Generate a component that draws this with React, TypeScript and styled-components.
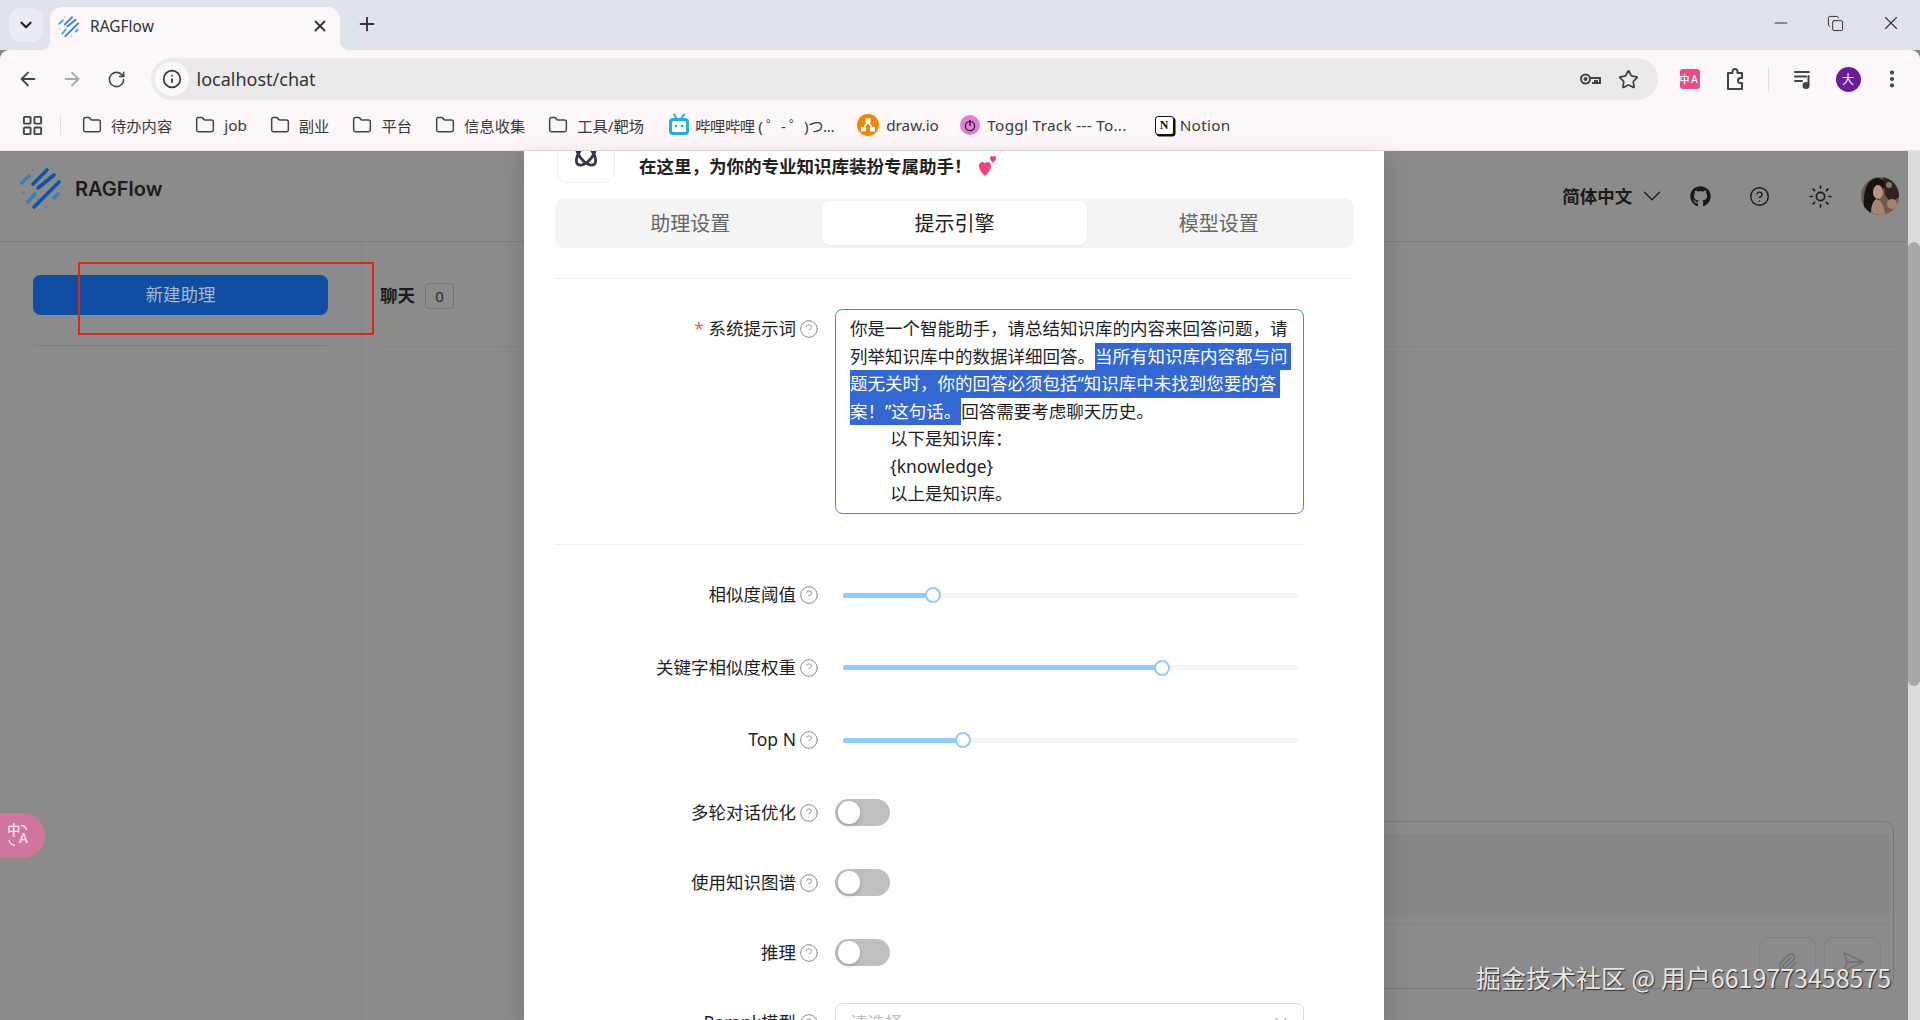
import React from "react";
import styled, { createGlobalStyle } from "styled-components";
import {
  ArrowLeft,
  ArrowRight,
  RotateCw,
  Info,
  Star,
  EllipsisVertical,
  Folder,
  LayoutGrid,
  Plus,
  X,
  ChevronDown,
  Minus,
  Copy,
  CircleHelp,
  Sun,
  Paperclip,
  SendHorizontal,
} from "lucide-react";
import { FaGithub } from "react-icons/fa";

const Global = createGlobalStyle`
  html, body { margin: 0; padding: 0; height: 100%; overflow: hidden; }
  body { font-family: "Noto Sans", "Noto Sans CJK SC", sans-serif; background: #8b8b8b; }
  * { box-sizing: border-box; }
`;

const Window = styled.div`
  width: 1920px;
  height: 1020px;
  display: flex;
  flex-direction: column;
  position: relative;
  overflow: hidden;
`;

/* ---------- browser chrome ---------- */
const TabStrip = styled.div`
  height: 50px;
  background: #dfe3ea;
  display: flex;
  align-items: flex-end;
  padding-left: 9px;
  flex: none;
`;
const TabMenu = styled.div`
  width: 34px;
  height: 34px;
  margin-bottom: 8px;
  border-radius: 12px;
  background: #e9edf6;
  display: flex;
  align-items: center;
  justify-content: center;
  color: #222;
`;
const Tab = styled.div`
  width: 290px;
  height: 43px;
  margin-left: 7px;
  background: #fdf7f9;
  border-radius: 12px 12px 0 0;
  display: flex;
  align-items: center;
  padding: 0 11px 6px 3px;
  color: #333;
  font-size: 15.5px;
  position: relative;
  &::before, &::after {
    content: "";
    position: absolute;
    bottom: 0;
    width: 10px;
    height: 10px;
  }
  &::before { left: -10px; background: radial-gradient(circle at 0 0, transparent 10px, #fdf7f9 10.5px); }
  &::after { right: -10px; background: radial-gradient(circle at 100% 0, transparent 10px, #fdf7f9 10.5px); }
`;
const TabTitle = styled.span`
  flex: 1;
  margin-left: 1px;
`;
const NewTab = styled.div`
  margin: 0 0 15px 16px;
  color: #333;
  display: flex;
`;
const WindowControls = styled.div`
  margin-left: auto;
  display: flex;
  align-items: center;
  gap: 36px;
  padding: 0 18px 16px 0;
  color: #333;
`;
const Toolbar = styled.div`
  height: 55px;
  flex: none;
  background: #fdf7f9;
  border-radius: 9px 9px 0 0;
  padding: 8px 0 5px 16px;
  display: flex;
  align-items: center;
  color: #444;
`;
const NavButton = styled.div<{ $muted?: boolean; $gap?: number; $lead?: number }>`
  display: flex;
  width: 24px;
  justify-content: center;
  margin-left: ${(p) => p.$lead ?? 0}px;
  margin-right: ${(p) => p.$gap ?? 0}px;
  color: ${(p) => (p.$muted ? "#a8a8a8" : "#444")};
`;
const AddressBar = styled.div`
  width: 1507px;
  height: 42px;
  background: #ece9ec;
  border-radius: 21px;
  display: flex;
  align-items: center;
  padding: 0 19px 0 4px;
`;
const SiteChip = styled.div`
  width: 34px;
  height: 34px;
  border-radius: 50%;
  background: #fdf7f9;
  display: flex;
  align-items: center;
  justify-content: center;
  color: #333;
`;
const Url = styled.span`
  margin-left: 8px;
  font-size: 18px;
  color: #333;
  flex: 1;
`;
const AddressActions = styled.div`
  display: flex;
  align-items: center;
  gap: 16px;
  color: #444;
`;
const ToolbarRight = styled.div`
  display: flex;
  align-items: center;
  margin-left: 22px;
`;
const ExtMark = styled.div`
  width: 20px;
  height: 20px;
  border-radius: 3px;
  background: #ea4c89;
  color: #fff;
  display: grid;
  grid-template-columns: 1fr 1fr;
  font-size: 10px;
  line-height: 20px;
  text-align: center;
  font-weight: 500;
`;
const ToolbarSep = styled.div`
  width: 1px;
  height: 24px;
  background: #d7dfee;
  margin: 0 22px 0 21px;
`;
const ProfileDot = styled.div`
  width: 25px;
  height: 25px;
  border-radius: 50%;
  background: #6a1b9a;
  color: #fff;
  font-size: 12px;
  display: flex;
  align-items: center;
  justify-content: center;
  margin: 0 20px 0 21px;
`;
const Bookmarks = styled.div`
  height: 46px;
  flex: none;
  background: #fdf7f9;
  border-bottom: 1px solid #e4e1e3;
  padding: 0 0 5px 21px;
  display: flex;
  align-items: center;
  color: #444;
`;
const BookmarkSep = styled.div`
  width: 1px;
  height: 20px;
  background: #d7dfee;
  margin: 0 21px 0 16px;
`;
const Bookmark = styled.div<{ $after?: number; $space?: number; $track?: number }>`
  display: flex;
  align-items: center;
  gap: ${(p) => p.$space ?? 9}px;
  margin-right: ${(p) => p.$after ?? 23}px;
  font-size: 15.3px;
  letter-spacing: ${(p) => p.$track ?? 0}px;
  color: #3a3a3a;
  white-space: nowrap;
`;
const NotionMark = styled.div`
  width: 19px;
  height: 19px;
  border: 1.5px solid #111;
  border-radius: 3px;
  background: #fff;
  box-shadow: 1.5px 1.5px 0 #111;
  font: 700 12px/16px "Liberation Serif", serif;
  color: #111;
  text-align: center;
  letter-spacing: 0;
`;

/* ---------- app behind the dialog ---------- */
const PageArea = styled.div`
  flex: 1;
  min-height: 0;
  display: flex;
  background: #8b8b8b;
`;
const PageMain = styled.div`
  flex: 1;
  display: flex;
  flex-direction: column;
`;
const Header = styled.header`
  height: 91px;
  flex: none;
  border-bottom: 1px solid #7e7e7e;
  display: flex;
  align-items: center;
  padding-left: 10px;
  color: #1a1a1a;
`;
const Brand = styled.div`
  display: flex;
  align-items: center;
  align-self: flex-start;
  padding-top: 9px;
`;
const BrandName = styled.span`
  font: 600 20px "Inter", sans-serif;
  color: #1c1c1c;
  margin: 2px 0 0 -5px;
`;
const HeaderTools = styled.div`
  margin-left: auto;
  display: flex;
  align-items: center;
  padding-right: 9px;
`;
const Lang = styled.span`
  font-size: 17.5px;
  font-weight: 700;
  color: #1a1a1a;
  margin: -2px 0 0 0;
`;
const HeaderIcon = styled.div<{ $gap: number }>`
  display: flex;
  margin-left: ${(p) => p.$gap}px;
  color: #1a1a1a;
`;
const Body = styled.div`
  flex: 1;
  min-height: 0;
  display: flex;
`;
const Sidebar = styled.aside`
  width: 362px;
  flex: none;
  padding: 33px 34px 0 33px;
  border-right: 1px solid #848484;
`;
const CreateButton = styled.div`
  height: 40px;
  width: 295px;
  background: #0e4da1;
  border-radius: 7.5px;
  color: #a9b7c8;
  font-size: 17.5px;
  padding-bottom: 3px;
  display: flex;
  align-items: center;
  justify-content: center;
`;
const SideRule = styled.div`
  height: 1px;
  background: #7f7f7f;
  margin: 30px 0 0 3px;
`;
const Content = styled.main`
  flex: 1;
  min-width: 0;
  display: flex;
  flex-direction: column;
  padding: 41px 14px 31px 18px;
`;
const ChatHead = styled.div`
  display: flex;
  align-items: center;
  gap: 10px;
  height: 26px;
`;
const ChatTitle = styled.span`
  font-size: 17.5px;
  font-weight: 700;
  color: #1a1a1a;
  margin-top: -3px;
`;
const CountBadge = styled.span`
  width: 29px;
  height: 26px;
  border: 1px solid #757575;
  border-radius: 4px;
  background: #8b8b8b;
  font-size: 15px;
  color: #2a2a2a;
  display: flex;
  align-items: center;
  justify-content: center;
`;
const ContentRule = styled.div`
  height: 1px;
  background: #838383;
  margin-top: 37px;
`;
const ChatBox = styled.div`
  margin-top: auto;
  margin-left: auto;
  width: 720px;
  height: 168px;
  border: 1px solid #777;
  border-radius: 10px;
  padding: 12px 4px 0 0;
  display: flex;
  flex-direction: column;
`;
const ChatInput = styled.div`
  height: 82px;
  background: #868686;
`;
const ChatRule = styled.div`
  height: 1px;
  background: #828282;
  margin-top: 7px;
  margin-right: -4px;
`;
const ChatActions = styled.div`
  display: flex;
  justify-content: flex-end;
  gap: 8px;
  margin: 13px 8px 0 0;
`;
const ChatAction = styled.div`
  width: 57px;
  height: 50px;
  border: 1px solid #808080;
  border-radius: 9px;
  color: #6e6e6e;
  display: flex;
  align-items: center;
  justify-content: center;
`;
const ScrollTrack = styled.div`
  width: 12px;
  flex: none;
  background: #dcdcdc;
  padding-top: 91px;
`;
const ScrollThumb = styled.div`
  height: 444px;
  background: #a8a8a8;
  border-radius: 6px;
`;

/* ---------- overlay pieces ---------- */
const Dialog = styled.section`
  position: absolute;
  left: 524px;
  top: 151px;
  width: 860px;
  height: 869px;
  background: #fff;
  overflow: hidden;
  padding: 0 31px;
  box-shadow: 0 6px 16px rgba(0, 0, 0, 0.08), 0 3px 6px -4px rgba(0, 0, 0, 0.12), 0 9px 28px 8px rgba(0, 0, 0, 0.05);
  color: #222;
`;
const DialogHead = styled.div`
  margin-top: -26px;
  display: flex;
  padding-left: 2px;
`;
const IconTile = styled.div`
  width: 58px;
  height: 58px;
  border: 1px solid #efefef;
  border-radius: 10px;
  display: flex;
  align-items: center;
  justify-content: center;
`;
const DialogTitle = styled.div`
  margin: 23px 0 0 24px;
  font-size: 17.5px;
  line-height: 26px;
  font-weight: 700;
  color: #222;
  display: flex;
  align-items: center;
  gap: 6px;
`;
const Segments = styled.div`
  margin-top: 15px;
  width: 799px;
  height: 50px;
  padding: 3px;
  border-radius: 10px;
  background: #f5f5f5;
  display: grid;
  grid-template-columns: repeat(3, 1fr);
`;
const Segment = styled.div<{ $active?: boolean }>`
  border-radius: 7.5px;
  font-size: 20px;
  padding-bottom: 2px;
  display: flex;
  align-items: center;
  justify-content: center;
  color: ${(p) => (p.$active ? "#222" : "#666")};
  background: ${(p) => (p.$active ? "#fff" : "transparent")};
  box-shadow: ${(p) => (p.$active ? "0 1px 3px rgba(0,0,0,.05)" : "none")};
`;
const Rule = styled.div<{ $width: number; $top: number; $bottom?: number }>`
  width: ${(p) => p.$width}px;
  height: 1px;
  background: #efefef;
  margin-top: ${(p) => p.$top}px;
  margin-bottom: ${(p) => p.$bottom ?? 0}px;
`;
const FormRow = styled.div<{ $top?: number; $gap?: number; $start?: boolean }>`
  display: flex;
  align-items: ${(p) => (p.$start ? "flex-start" : "center")};
  min-height: 40px;
  margin-top: ${(p) => p.$top ?? 0}px;
  margin-bottom: ${(p) => p.$gap ?? 0}px;
`;
const Label = styled.div`
  width: 280px;
  height: 40px;
  flex: none;
  padding: 0 16px 3px 0;
  display: flex;
  align-items: center;
  justify-content: flex-end;
  font-size: 17.5px;
  color: #1f1f1f;
  white-space: nowrap;
`;
const Required = styled.span`
  color: #ff4d4f;
  margin-right: 5px;
  font-size: 17px;
`;
const Help = styled.span`
  display: flex;
  margin: 3px 0 0 3px;
  color: #8c8c8c;
`;
const PromptBox = styled.div`
  width: 469px;
  height: 205px;
  border: 1px solid #2f86f5;
  border-radius: 7.5px;
  padding: 5px 0 0 14px;
  font-size: 17.5px;
  line-height: 27.5px;
  color: #1f1f1f;
`;
const PromptLine = styled.div<{ $indent?: boolean }>`
  height: 27.5px;
  white-space: nowrap;
  padding-left: ${(p) => (p.$indent ? 40 : 0)}px;
`;
const Selected = styled.span<{ $tail?: number }>`
  display: inline-block;
  height: 27.5px;
  vertical-align: top;
  background: #3367d1;
  color: #fff;
  padding-right: ${(p) => p.$tail ?? 0}px;
`;
const SliderBox = styled.div`
  width: 468px;
  padding: 0 5px 0 8px;
`;
const SliderRail = styled.div`
  position: relative;
  height: 5px;
  border-radius: 3px;
  background: #f5f5f5;
`;
const SliderFill = styled.div<{ $value: number }>`
  height: 100%;
  width: ${(p) => p.$value}%;
  border-radius: 3px;
  background: #91caff;
`;
const SliderHandle = styled.div<{ $value: number }>`
  position: absolute;
  top: 50%;
  left: ${(p) => p.$value}%;
  width: 16px;
  height: 16px;
  border-radius: 50%;
  background: #fff;
  border: 2.5px solid #91caff;
  transform: translate(-50%, -50%);
`;
const SwitchTrack = styled.div`
  width: 55px;
  height: 27.5px;
  border-radius: 14px;
  background: #bfbfbf;
  padding: 2.5px;
`;
const SwitchKnob = styled.div`
  width: 22.5px;
  height: 22.5px;
  border-radius: 50%;
  background: #fff;
  box-shadow: 0 2px 4px rgba(0, 35, 11, 0.2);
`;
const SelectBox = styled.div`
  width: 469px;
  height: 40px;
  border: 1px solid #d9d9d9;
  border-radius: 7.5px;
  padding: 0 12px 3px 14px;
  display: flex;
  align-items: center;
  justify-content: space-between;
  font-size: 17.5px;
  color: #bfbfbf;
`;
const Annotation = styled.div`
  position: absolute;
  left: 78px;
  top: 262px;
  width: 296px;
  height: 73px;
  border: 2px solid #e2231a;
`;
const FloatTranslate = styled.div`
  position: absolute;
  left: 0;
  top: 813px;
  width: 45px;
  height: 45px;
  border-radius: 0 23px 23px 0;
  background: #d0769e;
  color: #f5e6ee;
  display: grid;
  grid-template-columns: 12px 12px;
  padding: 10px 0 0 7px;
  font-size: 13.5px;
  line-height: 14px;
  font-weight: 500;
`;
const FloatGlyph = styled.span<{ $low?: boolean }>`
  margin-top: ${(p) => (p.$low ? 8 : 0)}px;
`;
const FloatArcs = styled.svg`
  position: absolute;
  left: 8px;
  top: 11px;
`;
const Watermark = styled.div`
  position: absolute;
  left: 1476px;
  top: 959px;
  font-size: 25px;
  line-height: 36px;
  font-family: "Noto Sans CJK SC", "Noto Sans", sans-serif;
  color: #e6e6e6;
  text-shadow: 1px 1px 1px #2a2a2a;
  white-space: nowrap;
`;
const FaviconSlot = styled.span`
  display: flex;
  width: 36px;
  height: 28px;
  flex: none;
`;

/* ---------- drawings ---------- */
const Logo = ({ size = 70, tone = "#1150a2", soft = "#3d7fb5" }: { size?: number; tone?: string; soft?: string }) => (
  <svg width={size} height={(size * 55) / 70} viewBox="0 0 70 55" fill="none" strokeLinecap="round">
    <g stroke={tone} strokeWidth="3.6">
      <path d="M23 24 37 10" />
      <path d="M28 28 44 15" />
      <path d="M24 47 49 22" />
    </g>
    <g stroke={soft} strokeWidth="3.6">
      <path d="M12 23 19 16" />
      <path d="M18 42 25 34" />
      <path d="M44 38 48 34" />
    </g>
    <g fill={soft} opacity=".6">
      <circle cx="23" cy="10" r="1.6" />
      <circle cx="13" cy="33" r="1.6" />
      <circle cx="36" cy="47" r="1.6" />
    </g>
  </svg>
);

const KeyIcon = () => (
  <svg width="24" height="24" viewBox="0 0 24 24" fill="none" stroke="#444" strokeWidth="2">
    <circle cx="7.500" cy="12" r="4.500" />
    <path d="M12 11h10v5h-3v-2h-2v2h-3" />
    <circle cx="7.500" cy="12" r="1" fill="#444" />
  </svg>
);

const PuzzleIcon = () => (
  <svg width="24" height="26" viewBox="0 0 24 26" fill="none" stroke="#444" strokeWidth="2" strokeLinejoin="round">
    <path d="M5 7h4.500V5.500a2.500 2.500 0 0 1 5 0V7H19v5h-1.500a2.500 2.500 0 0 0 0 5H19v6H5z" />
  </svg>
);

const QueueIcon = () => (
  <svg width="24" height="24" viewBox="0 0 24 24" fill="none" stroke="#444" strokeWidth="2" strokeLinecap="round">
    <path d="M4 5h14M4 9.500h11M4 14h7" />
    <path d="M17.500 9v9" />
    <circle cx="15" cy="18.500" r="2.500" fill="#444" />
  </svg>
);

const BiliIcon = () => (
  <svg width="24" height="24" viewBox="0 0 24 24" fill="none">
    <path d="M7 1.500 10 6M17 1.500 14 6" stroke="#23ade5" strokeWidth="2" strokeLinecap="round" />
    <rect x="2" y="5" width="20" height="17" rx="4" fill="#23ade5" />
    <rect x="5" y="8" width="14" height="11" rx="1.500" fill="#fff" />
    <circle cx="9" cy="13" r="1.300" fill="#23ade5" />
    <circle cx="15" cy="13" r="1.300" fill="#23ade5" />
  </svg>
);

const DrawioIcon = () => (
  <svg width="22" height="22" viewBox="0 0 22 22">
    <circle cx="11" cy="11" r="11" fill="#f08705" />
    <path d="M11 8 6.500 14M11 8l4.500 6" stroke="#fff" strokeWidth="1.400" />
    <rect x="8.500" y="4.500" width="5" height="4.500" fill="#fff" />
    <rect x="4" y="13" width="5" height="4.500" fill="#fff" />
    <rect x="13" y="13" width="5" height="4.500" fill="#fff" />
  </svg>
);

const TogglIcon = () => (
  <svg width="20" height="20" viewBox="0 0 20 20" fill="none">
    <circle cx="10" cy="10" r="10" fill="#e07ed8" />
    <circle cx="10" cy="11" r="4.600" stroke="#222" strokeWidth="1.300" />
    <path d="M10 5v6" stroke="#222" strokeWidth="1.400" />
  </svg>
);

const AtomIcon = () => (
  <svg width="32" height="32" viewBox="0 0 34 34" fill="none" stroke="#33384a" strokeWidth="3">
    <ellipse cx="17" cy="17" rx="7" ry="14" transform="rotate(-38 17 17)" />
    <ellipse cx="17" cy="17" rx="7" ry="14" transform="rotate(38 17 17)" />
  </svg>
);

const Hearts = () => (
  <svg width="20" height="22" viewBox="0 0 20 22" fill="#f0437e">
    <path d="M7 21C3 17 1 14 1 11c0-2.400 1.700-4 3.400-4C5.700 7 6.500 7.700 7 8.600 7.500 7.700 8.300 7 9.600 7 11.300 7 13 8.600 13 11c0 3-2 6-6 10z" />
    <path d="M15 8c-2-2-3-3.500-3-5 0-1.200.9-2 1.700-2 .6 0 1 .3 1.300.8.300-.5.700-.8 1.300-.8.800 0 1.700.8 1.700 2 0 1.500-1 3-3 5z" />
  </svg>
);

const Avatar = () => (
  <svg width="38" height="38" viewBox="0 0 38 38">
    <defs>
      <clipPath id="avatar-clip">
        <circle cx="19" cy="19" r="19" />
      </clipPath>
    </defs>
    <g clipPath="url(#avatar-clip)">
      <rect width="38" height="38" fill="#6d5a4f" />
      <path d="M22 0h16v20l-8 6-6-8z" fill="#2f2320" />
      <path d="M3 30C2 14 6 2 16 1c7 0 9 6 7 10l-6 8 3 19H6z" fill="#17120f" />
      <ellipse cx="17" cy="15" rx="5" ry="7" fill="#bd9483" />
      <path d="M15 22c4 1 8 4 9 16H10c0-8 1-13 5-16z" fill="#a68474" />
      <circle cx="31" cy="27" r="5" fill="#a97f6d" />
      <circle cx="28" cy="8" r="3" fill="#8d7466" />
    </g>
  </svg>
);

const Q = () => (
  <Help>
    <CircleHelp size={20} strokeWidth={1.2} />
  </Help>
);

const FOLDERS = ["待办内容", "job", "副业", "平台", "信息收集", "工具/靶场"];

const SLIDERS = [
  { label: "相似度阈值", value: 19.8 },
  { label: "关键字相似度权重", value: 70 },
  { label: "Top N", value: 26.4 },
];
const SWITCHES = ["多轮对话优化", "使用知识图谱", "推理"];

export default function App() {
  return (
    <Window>
      <Global />
      <TabStrip>
        <TabMenu>
          <ChevronDown size={18} strokeWidth={3} />
        </TabMenu>
        <Tab>
          <FaviconSlot>
            <Logo size={36} tone="#2f7fe0" soft="#4aa0e8" />
          </FaviconSlot>
          <TabTitle>RAGFlow</TabTitle>
          <X size={18} strokeWidth={2.4} />
        </Tab>
        <NewTab>
          <Plus size={22} strokeWidth={2} />
        </NewTab>
        <WindowControls>
          <Minus size={20} strokeWidth={1.3} />
          <Copy size={17} strokeWidth={1.4} />
          <X size={22} strokeWidth={1.2} />
        </WindowControls>
      </TabStrip>
      <Toolbar>
        <NavButton $gap={20}>
          <ArrowLeft size={22} strokeWidth={2} />
        </NavButton>
        <NavButton $muted $gap={20}>
          <ArrowRight size={22} strokeWidth={2} />
        </NavButton>
        <NavButton $gap={22.5}>
          <RotateCw size={19} strokeWidth={2} />
        </NavButton>
        <AddressBar>
          <SiteChip>
            <Info size={20} strokeWidth={2} />
          </SiteChip>
          <Url>localhost/chat</Url>
          <AddressActions>
            <KeyIcon />
            <Star size={21} strokeWidth={2} />
          </AddressActions>
        </AddressBar>
        <ToolbarRight>
          <ExtMark>
            <span>中</span>
            <span>A</span>
          </ExtMark>
          <NavButton $lead={23}>
            <PuzzleIcon />
          </NavButton>
          <ToolbarSep />
          <NavButton>
            <QueueIcon />
          </NavButton>
          <ProfileDot>大</ProfileDot>
          <EllipsisVertical size={22} strokeWidth={2.6} />
        </ToolbarRight>
      </Toolbar>
      <Bookmarks>
        <LayoutGrid size={23} strokeWidth={2} />
        <BookmarkSep />
        {FOLDERS.map((name) => (
          <Bookmark key={name}>
            <Folder size={20} strokeWidth={1.8} color="#444" />
            {name}
          </Bookmark>
        ))}
        <Bookmark $space={4} $track={-0.4}>
          <BiliIcon />
          哔哩哔哩 ( ゜- ゜)つ...
        </Bookmark>
        <Bookmark $after={21.5} $space={7}>
          <DrawioIcon />
          draw.io
        </Bookmark>
        <Bookmark $track={0.3} $space={7} $after={28}>
          <TogglIcon />
          Toggl Track --- To...
        </Bookmark>
        <Bookmark $space={6} $track={0.3}>
          <NotionMark>N</NotionMark>
          Notion
        </Bookmark>
      </Bookmarks>

      <PageArea>
        <PageMain>
          <Header>
            <Brand>
              <Logo />
              <BrandName>RAGFlow</BrandName>
            </Brand>
            <HeaderTools>
              <Lang>简体中文</Lang>
              <HeaderIcon $gap={4.2}>
                <ChevronDown size={30} strokeWidth={1} />
              </HeaderIcon>
              <HeaderIcon $gap={23.5}>
                <FaGithub size={21} />
              </HeaderIcon>
              <HeaderIcon $gap={38}>
                <CircleHelp size={21} strokeWidth={1.6} />
              </HeaderIcon>
              <HeaderIcon $gap={38}>
                <Sun size={25} strokeWidth={1.6} />
              </HeaderIcon>
              <HeaderIcon $gap={28}>
                <Avatar />
              </HeaderIcon>
            </HeaderTools>
          </Header>
          <Body>
            <Sidebar>
              <CreateButton>新建助理</CreateButton>
              <SideRule />
            </Sidebar>
            <Content>
              <ChatHead>
                <ChatTitle>聊天</ChatTitle>
                <CountBadge>0</CountBadge>
              </ChatHead>
              <ContentRule />
              <ChatBox>
                <ChatInput />
                <ChatRule />
                <ChatActions>
                  <ChatAction>
                    <Paperclip size={21} strokeWidth={1.5} />
                  </ChatAction>
                  <ChatAction>
                    <SendHorizontal size={24} strokeWidth={1.3} />
                  </ChatAction>
                </ChatActions>
              </ChatBox>
            </Content>
          </Body>
        </PageMain>
        <ScrollTrack>
          <ScrollThumb />
        </ScrollTrack>
      </PageArea>

      <Annotation />
      <FloatTranslate>
        <FloatGlyph>中</FloatGlyph>
        <FloatGlyph $low>A</FloatGlyph>
        <FloatArcs width="22" height="26" viewBox="0 0 22 26" fill="none" stroke="#f5e6ee" strokeWidth="1.4">
          <path d="M13 1.500c3 0 5 1.500 5.500 4.500" />
          <path d="M1 16c.5 3 2.500 5 6 5.500" />
        </FloatArcs>
      </FloatTranslate>

      <Dialog>
        <DialogHead>
          <IconTile>
            <AtomIcon />
          </IconTile>
          <DialogTitle>
            在这里，为你的专业知识库装扮专属助手！
            <Hearts />
          </DialogTitle>
        </DialogHead>
        <Segments>
          <Segment>助理设置</Segment>
          <Segment $active>提示引擎</Segment>
          <Segment>模型设置</Segment>
        </Segments>
        <Rule $width={797} $top={30} />
        <FormRow $top={30} $start>
          <Label>
            <Required>*</Required>
            系统提示词
            <Q />
          </Label>
          <PromptBox>
            <PromptLine>你是一个智能助手，请总结知识库的内容来回答问题，请</PromptLine>
            <PromptLine>
              列举知识库中的数据详细回答。<Selected $tail={3}>当所有知识库内容都与问</Selected>
            </PromptLine>
            <PromptLine>
              <Selected $tail={4}>题无关时，你的回答必须包括“知识库中未找到您要的答</Selected>
            </PromptLine>
            <PromptLine>
              <Selected>案！”这句话。</Selected>回答需要考虑聊天历史。
            </PromptLine>
            <PromptLine $indent>以下是知识库：</PromptLine>
            <PromptLine $indent>{"{knowledge}"}</PromptLine>
            <PromptLine $indent>以上是知识库。</PromptLine>
          </PromptBox>
        </FormRow>
        <Rule $width={749} $top={30} $bottom={30} />
        {SLIDERS.map((s) => (
          <FormRow key={s.label} $gap={32.5}>
            <Label>
              {s.label}
              <Q />
            </Label>
            <SliderBox>
              <SliderRail>
                <SliderFill $value={s.value} />
                <SliderHandle $value={s.value} />
              </SliderRail>
            </SliderBox>
          </FormRow>
        ))}
        {SWITCHES.map((label) => (
          <FormRow key={label} $gap={30}>
            <Label>
              {label}
              <Q />
            </Label>
            <SwitchTrack>
              <SwitchKnob />
            </SwitchTrack>
          </FormRow>
        ))}
        <FormRow>
          <Label>
            Rerank模型
            <Q />
          </Label>
          <SelectBox>
            请选择
            <ChevronDown size={20} strokeWidth={1.3} color="#aaa" />
          </SelectBox>
        </FormRow>
      </Dialog>

      <Watermark>掘金技术社区 @ 用户6619773458575</Watermark>
    </Window>
  );
}
